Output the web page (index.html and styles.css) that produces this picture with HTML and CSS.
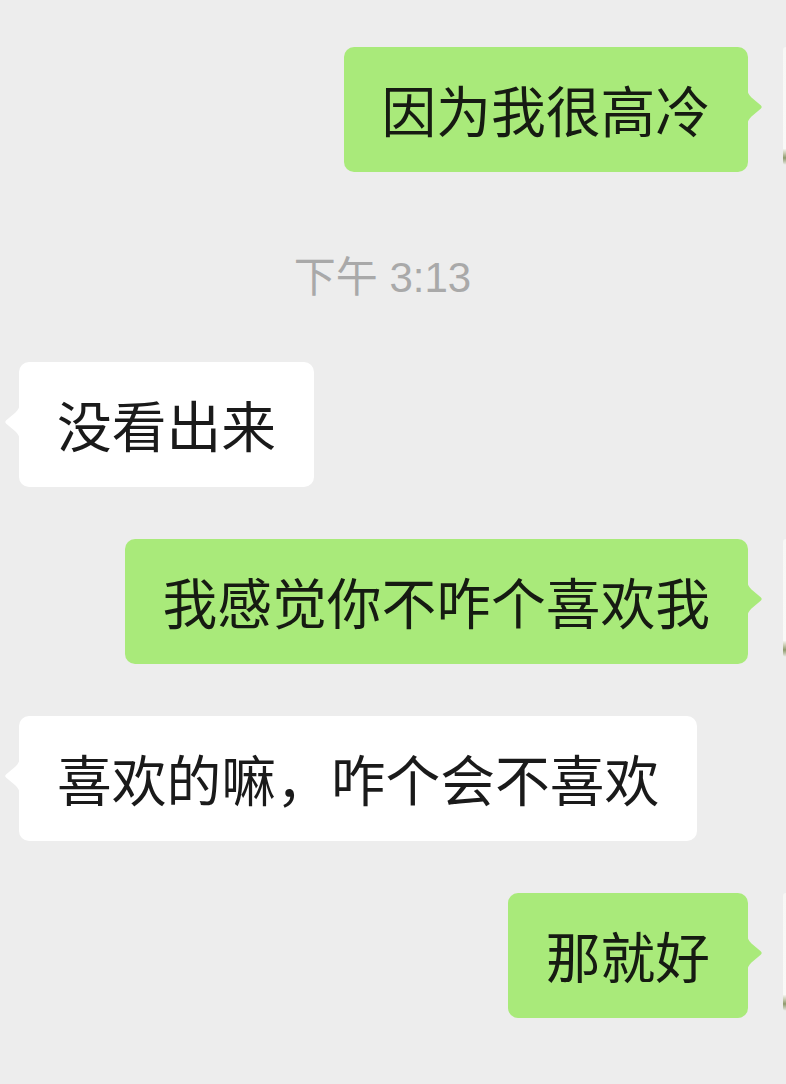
FILE: index.html
```html
<!DOCTYPE html>
<html lang="zh-CN">
<head>
<meta charset="utf-8">
<title>聊天</title>
<link rel="stylesheet" href="styles.css">
</head>
<body>
<main class="chat">
  <div class="row me">
    <div class="bubble green">因为我很高冷
      <svg class="tail tail-right" viewBox="0 0 16 40" width="16" height="40"><path d="M0 0 C0 5 2 8 4.5 10.5 L14 18.5 Q15.6 20 14 21.5 L4.5 29.5 C2 32 0 35 0 40 Z"/></svg>
    </div>
    <div class="avatar"></div>
  </div>

  <div class="time">下午 3:13</div>

  <div class="row them">
    <div class="bubble white">没看出来
      <svg class="tail tail-left" viewBox="0 0 16 40" width="16" height="40"><path d="M16 0 C16 5 14 8 11.5 10.5 L2 18.5 Q0.4 20 2 21.5 L11.5 29.5 C14 32 16 35 16 40 Z"/></svg>
    </div>
  </div>

  <div class="row me">
    <div class="bubble green">我感觉你不咋个喜欢我
      <svg class="tail tail-right" viewBox="0 0 16 40" width="16" height="40"><path d="M0 0 C0 5 2 8 4.5 10.5 L14 18.5 Q15.6 20 14 21.5 L4.5 29.5 C2 32 0 35 0 40 Z"/></svg>
    </div>
    <div class="avatar"></div>
  </div>

  <div class="row them">
    <div class="bubble white">喜欢的嘛，咋个会不喜欢
      <svg class="tail tail-left" viewBox="0 0 16 40" width="16" height="40"><path d="M16 0 C16 5 14 8 11.5 10.5 L2 18.5 Q0.4 20 2 21.5 L11.5 29.5 C14 32 16 35 16 40 Z"/></svg>
    </div>
  </div>

  <div class="row me">
    <div class="bubble green">那就好
      <svg class="tail tail-right" viewBox="0 0 16 40" width="16" height="40"><path d="M0 0 C0 5 2 8 4.5 10.5 L14 18.5 Q15.6 20 14 21.5 L4.5 29.5 C2 32 0 35 0 40 Z"/></svg>
    </div>
    <div class="avatar"></div>
  </div>
</main>
</body>
</html>
```

FILE: styles.css
```css
html, body {
  margin: 0;
  padding: 0;
  background: #ededed;
  overflow: hidden;
}

body {
  width: 786px;
  height: 1084px;
  font-family: "Noto Sans CJK SC", "Noto Sans", sans-serif;
  color: #1a1a1a;
}

.chat {
  display: flex;
  flex-direction: column;
  padding-top: 47px;
}

.row {
  display: flex;
  align-items: flex-start;
  margin-bottom: 52px;
}

.row.me {
  justify-content: flex-end;
}

.row.them {
  justify-content: flex-start;
  padding-left: 19px;
}

.bubble {
  position: relative;
  height: 125px;
  box-sizing: border-box;
  display: flex;
  align-items: center;
  padding: 0 38px 2px;
  border-radius: 10px;
  font-size: 54.75px;
  line-height: 1;
  white-space: nowrap;
}

.bubble.green {
  background: #a9ea7a;
  color: #161b12;
}

.bubble.white {
  background: #ffffff;
}

.tail {
  position: absolute;
  top: 40px;
  display: block;
}

.tail-right {
  right: -15px;
  fill: #a9ea7a;
}

.tail-left {
  left: -15px;
  fill: #ffffff;
}

/* only the left edge of the avatar is visible in the frame */
.avatar {
  width: 3px;
  height: 118px;
  margin-top: 0;
  margin-left: 35px;
  border-radius: 3px 0 0 3px;
  background: linear-gradient(to bottom, #f7f7f5 0%, #f9f9f7 86%, #c9cdb3 90%, #8e9a6c 94%, #eeeeec 100%);
}

.time {
  margin-top: -52px;
  padding-top: 81px;
  padding-bottom: 59px;
  padding-right: 21px;
  text-align: center;
  font-family: "Liberation Sans", "Noto Sans CJK SC", sans-serif;
  font-size: 42px;
  line-height: 50px;
  color: #a9a9a9;
}
```
